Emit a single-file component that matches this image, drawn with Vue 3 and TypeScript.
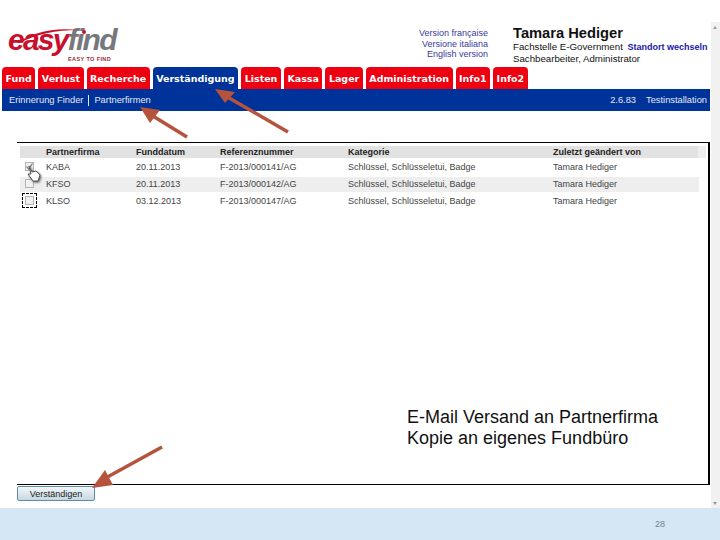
<template>
  <div class="slide">
    <div class="window">
      <div class="page">
        <header class="top">
          <div class="logo">
            <svg class="swoosh" width="80" height="16" viewBox="0 0 80 16">
              <path d="M1 15 C14 6 36 -1 62 2 C40 2 20 6 4 15 Z" fill="#c8102e" />
              <circle cx="68" cy="4" r="2" fill="#c8102e" />
            </svg>
            <div class="logo-word"><span class="easy">easy</span><span class="find">find</span></div>
            <div class="logo-sub">EASY TO FIND</div>
          </div>
          <div class="langs">
            <a v-for="lang in languages" :key="lang">{{ lang }}</a>
          </div>
          <div class="user">
            <div class="user-name">Tamara Hediger</div>
            <div>Fachstelle E-Government <a class="switch">Standort wechseln</a></div>
            <div>Sachbearbeiter, Administrator</div>
          </div>
        </header>

        <nav class="tabs">
          <div
            v-for="tab in tabs"
            :key="tab"
            class="tab"
            :class="{ active: tab === activeTab }"
          >
            {{ tab }}
          </div>
        </nav>
        <div class="subnav">
          <div class="subnav-links">
            <span>Erinnerung Finder</span>
            <i class="sep"></i>
            <span>Partnerfirmen</span>
          </div>
          <div class="version">
            <span>2.6.83</span>
            <span>Testinstallation</span>
          </div>
        </div>

        <section class="panel">
          <div class="table-wrap">
            <div class="row head">
              <div></div>
              <div v-for="col in columns" :key="col">{{ col }}</div>
            </div>
            <div
              v-for="(row, i) in rows"
              :key="row.firm"
              class="row"
              :class="{ stripe: i === 1 }"
            >
              <div class="check-cell">
                <span class="check" :class="{ focus: i === 2 }">
                  <svg v-if="i === 0" width="9" height="9" viewBox="0 0 9 9">
                    <path d="M1.5 4.5 L3.5 7 L7.5 1.5" fill="none" stroke="#777" stroke-width="1.2" />
                  </svg>
                </span>
              </div>
              <div>{{ row.firm }}</div>
              <div>{{ row.date }}</div>
              <div>{{ row.ref }}</div>
              <div>{{ row.category }}</div>
              <div>{{ row.user }}</div>
            </div>
          </div>
          <div class="note">
            <div>E-Mail Versand an Partnerfirma</div>
            <div>Kopie an eigenes Fundbüro</div>
          </div>
        </section>
        <button class="notify">Verständigen</button>
      </div>
      <div class="scrollbar">
        <span class="up"></span>
        <span class="down"></span>
      </div>

      <!-- annotation arrows lying over the screenshot -->
      <svg class="arrows" width="720" height="508" viewBox="0 0 720 508">
        <g v-for="a in arrows" :key="a.head">
          <path :d="a.shaft" fill="none" stroke="#b5533c" stroke-width="3.5" />
          <path :d="a.head" fill="#b5533c" />
        </g>
      </svg>
      <svg class="cursor" width="16" height="18" viewBox="0 0 16 18">
        <path d="M3 1 L6 7 L10 6 L14 10 L12 16 L7 16 L2 9 L5 9 Z" fill="#fff" stroke="#555" stroke-width="1" />
      </svg>
    </div>
    <footer class="foot"><span>28</span></footer>
  </div>
</template>

<script setup lang="ts">
interface FundRow {
  firm: string
  date: string
  ref: string
  category: string
  user: string
}

const languages = ['Version française', 'Versione italiana', 'English version']
const tabs = ['Fund', 'Verlust', 'Recherche', 'Verständigung', 'Listen', 'Kassa', 'Lager', 'Administration', 'Info1', 'Info2']
const activeTab = 'Verständigung'
const columns = ['Partnerfirma', 'Funddatum', 'Referenznummer', 'Kategorie', 'Zuletzt geändert von']

const rows: FundRow[] = [
  { firm: 'KABA', date: '20.11.2013', ref: 'F-2013/000141/AG', category: 'Schlüssel, Schlüsseletui, Badge', user: 'Tamara Hediger' },
  { firm: 'KFSO', date: '20.11.2013', ref: 'F-2013/000142/AG', category: 'Schlüssel, Schlüsseletui, Badge', user: 'Tamara Hediger' },
  { firm: 'KLSO', date: '03.12.2013', ref: 'F-2013/000147/AG', category: 'Schlüssel, Schlüsseletui, Badge', user: 'Tamara Hediger' }
]

const arrows = [
  { shaft: 'M187 137 L148 113', head: 'M140 107 L160 110 L150 123 Z' },
  { shaft: 'M288 132 L224 95', head: 'M215 89 L235 92 L225 103 Z' },
  { shaft: 'M162 447 L102 480', head: 'M92 488 L105 470 L113 485 Z' }
]
</script>

<style scoped>
.slide {
  width: 720px;
  height: 540px;
  overflow: hidden;
  display: flex;
  flex-direction: column;
  background: #ffffff;
  font-family: "Liberation Sans", Arial, sans-serif;
}

.window {
  position: relative;
  height: 508px;
  display: flex;
}

.page {
  width: 708px;
  margin-left: 2px;
}

.top {
  height: 52px;
  padding-top: 15px;
  display: flex;
}

.logo {
  position: relative;
  width: 117px;
  margin-left: 6px;
  padding-top: 12px;
}

.swoosh {
  position: absolute;
  left: 8px;
  top: 13px;
}

.logo-word {
  font-size: 30px;
  line-height: 26px;
  font-weight: 700;
  font-style: italic;
  letter-spacing: -1.75px;
}

.easy {
  color: #c8102e;
}

.find {
  color: #77787b;
}

.logo-sub {
  margin: 3px 0 0 60px;
  font-size: 5.5px;
  line-height: 6px;
  font-weight: 700;
  letter-spacing: 0.4px;
  color: #9b2a35;
  white-space: nowrap;
}

.langs {
  width: 363px;
  margin-top: 13px;
  display: flex;
  flex-direction: column;
  align-items: flex-end;
  font-size: 9px;
  line-height: 10.5px;
  color: #3a3a9e;
}

.user {
  margin: 10px 0 0 25px;
  font-size: 9.7px;
  line-height: 11px;
  color: #111111;
  white-space: nowrap;
}

.user-name {
  font-size: 14.7px;
  line-height: 16px;
  font-weight: 700;
}

.switch {
  margin-left: 2px;
  color: #1a1aa8;
  font-weight: 700;
  font-size: 9px;
}

.tabs {
  display: flex;
  gap: 3px;
  height: 22px;
}

.tab {
  padding: 0 3.5px;
  display: flex;
  align-items: center;
  background: #ee0011;
  border-radius: 4px 4px 0 0;
  color: #ffffff;
  font-family: "DejaVu Sans", sans-serif;
  font-size: 9.5px;
  font-weight: 700;
}

.tab.active {
  background: #003399;
}

.subnav {
  height: 22px;
  padding: 0 3px 0 7px;
  display: flex;
  align-items: center;
  justify-content: space-between;
  background: #003399;
  color: #e4e8f4;
  font-size: 9.3px;
}

.subnav-links {
  display: flex;
  align-items: center;
  gap: 5px;
}

.sep {
  width: 1px;
  height: 11px;
  background: #e4e8f4;
}

.version {
  display: flex;
  gap: 10px;
}

.panel {
  position: relative;
  height: 338px;
  margin: 31px 0 0 15px;
  border-top: 1px solid #000000;
  border-right: 2px solid #000000;
  border-bottom: 1px solid #000000;
  padding: 3px 2px 0 3px;
}

.row {
  display: grid;
  grid-template-columns: 26px 90px 84px 128px 205px 1fr;
  align-items: center;
  height: 17px;
  margin-right: 7px;
  font-size: 9px;
  color: #444444;
  white-space: nowrap;
}

.row.head {
  height: 12px;
  margin: 0;
  background: linear-gradient(to right, #e2e2e2 678px, #eeeeee 678px);
  color: #222222;
  font-weight: 700;
}

.row.stripe {
  background: linear-gradient(transparent 2px, #eeeeee 2px);
}

.check-cell {
  padding-left: 5px;
}

.check {
  display: block;
  position: relative;
  width: 9px;
  height: 9px;
  border: 1px solid #b5b5b5;
  background: #f0f0f0;
  box-sizing: border-box;
}

.check svg {
  display: block;
  margin: -1px;
}

.check.focus::after {
  content: "";
  position: absolute;
  inset: -4px;
  border: 1px dashed #000000;
}

.note {
  position: absolute;
  left: 390px;
  top: 264px;
  font-size: 18px;
  line-height: 21px;
  color: #111111;
  white-space: nowrap;
}

.notify {
  display: block;
  width: 78px;
  height: 15px;
  margin: 1px 0 0 15px;
  padding: 0;
  border: 1px solid #5b8fa8;
  border-radius: 2px;
  background: linear-gradient(#f4f6f7, #c6d8e2);
  color: #222222;
  font-family: inherit;
  font-size: 9px;
}

.scrollbar {
  position: absolute;
  right: 0;
  top: 22px;
  bottom: 0;
  width: 9px;
  background: #f1f1f1;
}

.up,
.down {
  position: absolute;
  left: 2px;
  border-left: 2.5px solid transparent;
  border-right: 2.5px solid transparent;
}

.up {
  top: 4px;
  border-bottom: 3px solid #999999;
}

.down {
  bottom: 3px;
  border-top: 3px solid #999999;
}

.arrows {
  position: absolute;
  left: 0;
  top: 0;
  pointer-events: none;
}

.cursor {
  position: absolute;
  left: 26px;
  top: 165px;
  filter: drop-shadow(1px 1px 1px #555555);
}

.foot {
  height: 32px;
  background: #d5e6f5;
  display: flex;
  align-items: center;
  justify-content: flex-end;
  padding-right: 55px;
  font-size: 9px;
  color: #777f8a;
}
</style>
